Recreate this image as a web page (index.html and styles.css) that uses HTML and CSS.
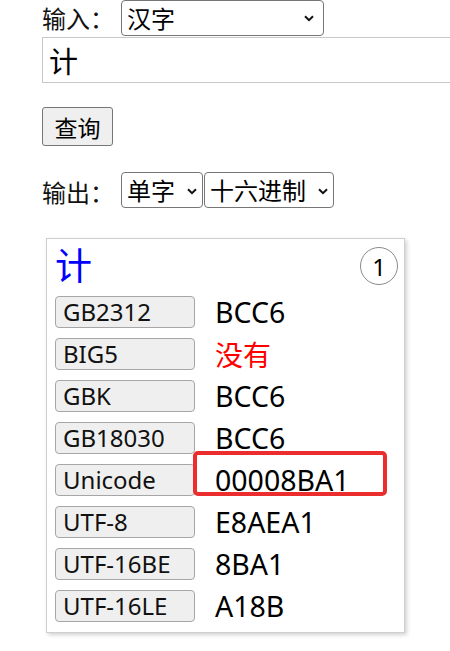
FILE: index.html
```html
<!DOCTYPE html>
<html lang="zh">
<head>
<meta charset="utf-8">
<link rel="stylesheet" href="styles.css">
</head>
<body>
<div class="page">
  <div class="line">
    <span class="lbl">输入：</span>
    <span class="sel-wrap">
      <select class="sel sel-type"><option>汉字</option></select>
      <svg class="chev" width="10" height="7" viewBox="0 0 10 7"><path d="M1 1.2 L5 5.2 L9 1.2" fill="none" stroke="#111" stroke-width="2"/></svg>
    </span>
  </div>
  <input class="txt" type="text" value="计">
  <div class="btn-row"><button class="btn">查询</button></div>
  <div class="line line-out">
    <span class="lbl">输出：</span>
    <span class="sel-wrap">
      <select class="sel sel-mode"><option>单字</option></select>
      <svg class="chev" width="10" height="7" viewBox="0 0 10 7"><path d="M1 1.2 L5 5.2 L9 1.2" fill="none" stroke="#111" stroke-width="2"/></svg>
    </span><span class="sel-wrap gap1">
      <select class="sel sel-base"><option>十六进制</option></select>
      <svg class="chev" width="10" height="7" viewBox="0 0 10 7"><path d="M1 1.2 L5 5.2 L9 1.2" fill="none" stroke="#111" stroke-width="2"/></svg>
    </span>
  </div>
  <div class="card">
    <div class="card-head">
      <span class="char">计</span>
      <span class="num">1</span>
    </div>
    <div class="rows">
      <div class="row"><span class="tag">GB2312</span><span class="val">BCC6</span></div>
      <div class="row"><span class="tag">BIG5</span><span class="val none">没有</span></div>
      <div class="row"><span class="tag">GBK</span><span class="val">BCC6</span></div>
      <div class="row"><span class="tag">GB18030</span><span class="val">BCC6</span></div>
      <div class="row"><span class="tag">Unicode</span><span class="val">00008BA1</span></div>
      <div class="row"><span class="tag">UTF-8</span><span class="val">E8AEA1</span></div>
      <div class="row"><span class="tag">UTF-16BE</span><span class="val">8BA1</span></div>
      <div class="row"><span class="tag">UTF-16LE</span><span class="val">A18B</span></div>
    </div>
  </div>
</div>
<div class="mark"></div>
</body>
</html>
```
FILE: styles.css
```css
body {
  margin: 0;
  background: #fff;
  color: #000;
  font-family: "Noto Sans", "Noto Sans CJK SC", sans-serif;
  position: relative;
}
.page {
  box-sizing: border-box;
  padding-left: 42px;
  width: 450px;
  overflow: hidden;
}
.line {
  display: flex;
  align-items: center;
  height: 36px;
}
.lbl {
  font-family: "Noto Sans CJK SC", sans-serif;
  font-size: 24px;
  width: 79px;
  line-height: 36px;
  color: #111;
  white-space: nowrap;
}
.line-out { margin-top: 26px; }
.line-out .lbl { padding-top: 4px; }
.sel-wrap {
  position: relative;
  display: inline-flex;
  height: 36px;
}
.gap1 { margin-left: 1px; }
.sel {
  -webkit-appearance: none;
  appearance: none;
  box-sizing: border-box;
  font-family: "Noto Sans CJK SC", sans-serif;
  font-size: 24px;
  line-height: 34px;
  height: 36px;
  border: 1px solid #767676;
  border-radius: 4px;
  background: #fff;
  color: #000;
  padding: 0 0 0 5px;
  margin: 0;
}
.chev {
  position: absolute;
  right: 10px;
  top: 15px;
  pointer-events: none;
}
.sel-mode + .chev, .sel-base + .chev { right: 6px; top: 16px; }
.sel-type { width: 203px; }
.sel-mode { width: 82px; }
.sel-base { width: 130px; }
.txt {
  display: block;
  margin: 1px 0 0 0;
  box-sizing: border-box;
  width: 420px;
  height: 46px;
  border: 1px solid #c8c8c8;
  padding: 0 6px;
  font-family: "Noto Sans CJK SC", sans-serif;
  font-size: 29px;
  color: #000;
  outline: none;
}
.btn-row { margin-top: 24px; height: 39px; }
.btn {
  box-sizing: border-box;
  width: 71px;
  height: 39px;
  font-family: "Noto Sans CJK SC", sans-serif;
  font-size: 23px;
  background: #efefef;
  border: 1px solid #767676;
  border-radius: 3px;
  padding: 0;
  color: #000;
}
.card {
  margin: 30px 0 8px 4px;
  box-sizing: border-box;
  width: 359px;
  border: 1px solid #cfcfcf;
  box-shadow: 2px 2px 4px rgba(0,0,0,0.18);
  padding: 6px 6px 10px 8px;
}
.card-head {
  display: flex;
  justify-content: space-between;
  align-items: center;
  height: 42px;
}
.char {
  color: #0000ff;
  font-family: "Noto Sans CJK SC", sans-serif;
  font-size: 37px;
  line-height: 42px;
  margin-top: -4px;
}
.num {
  box-sizing: border-box;
  width: 38px;
  height: 38px;
  border: 1px solid #8a8a8a;
  border-radius: 50%;
  display: flex;
  align-items: center;
  justify-content: center;
  font-size: 24px;
}
.rows {
  margin-top: 9px;
  display: flex;
  flex-direction: column;
  gap: 10px;
}
.row {
  display: flex;
  align-items: center;
  height: 32px;
}
.tag {
  box-sizing: border-box;
  width: 140px;
  height: 32px;
  background: #efefef;
  border: 1px solid #a6a6a6;
  border-radius: 4px;
  font-size: 24px;
  line-height: 30px;
  padding-left: 7px;
  color: #111;
}
.val {
  margin-left: 20px;
  font-size: 28.5px;
  line-height: 32px;
}
.none {
  color: #ff0000;
  font-family: "Noto Sans CJK SC", sans-serif;
  font-size: 28px;
}
.mark {
  position: absolute;
  left: 193px;
  top: 451px;
  width: 194px;
  height: 45px;
  box-sizing: border-box;
  border: 4px solid #ec2d2d;
  border-radius: 5px;
}
```
